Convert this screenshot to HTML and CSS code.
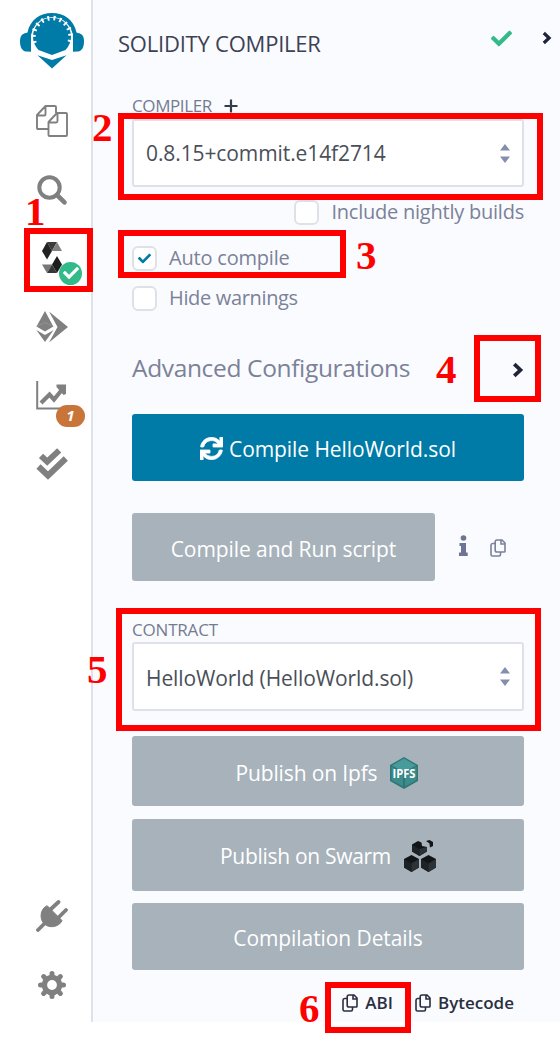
FILE: index.html
```html
<!DOCTYPE html>
<html lang="en">
<head>
<meta charset="utf-8">
<title>Solidity compiler</title>
<link rel="stylesheet" href="styles.css">
</head>
<body>
<svg class="defs" aria-hidden="true">
  <symbol id="copy" viewBox="0 0 16 18">
    <path d="M7 1h5l3 3v8.200q0 .8-.8.8H7q-1.800 0-1.800-1.800V2.800Q5.200 1 7 1zM11 1.200V5h3.800M4.700 4.500H2.600Q1 4.500 1 6.200V15.500q0 1.500 1.500 1.500H9q1.500 0 1.500-1.500V13.500" fill="none" stroke="currentColor" stroke-width="1.600"/>
  </symbol>
  <symbol id="chevron" viewBox="0 0 11 15">
    <path d="M2 2l5.800 5.500L2 13" fill="none" stroke="currentColor" stroke-width="3.500"/>
  </symbol>
  <symbol id="check" viewBox="0 0 512 512">
    <path fill="currentColor" d="M173.898 439.404l-166.400-166.400c-9.997-9.997-9.997-26.206 0-36.204l36.203-36.204c9.997-9.998 26.207-9.998 36.204 0L192 312.690 432.095 72.596c9.997-9.997 26.207-9.997 36.204 0l36.203 36.204c9.997 9.997 9.997 26.206 0 36.204l-294.400 294.401c-9.998 9.997-26.207 9.997-36.204-.001z"/>
  </symbol>
  <symbol id="sort" viewBox="0 0 10 19">
    <path fill="#868ead" d="M0 6.500L5 0l5 6.500zM0 12.500h10L5 19z"/>
  </symbol>
</svg>
<div class="app">
  <nav class="rail">
    <div class="logo">
      <svg width="64" height="56" viewBox="0 0 64 56" fill="#007aa6">
        <path d="M7.500 19.500C10 7 20 0 32 0s22 7 24.500 19.500l1.500.5c4 .8 6 3 6 8.500s-2 9.500-6 10l-5 .2V27C53 14 43 5.500 32 5.500S11 14 11 27v11.700l-5-.2c-4-.5-6-4.500-6-10s2-7.700 6-8.500z"/>
        <path d="M11 25a21 21 0 0 1 42 0v13.500L32 46 11 38.500z" fill="#fff"/>
        <path d="M18.500 37a19 19 0 1 1 27 0L32 42z"/>
        <path d="M15.300 31.800a18.600 18.600 0 1 1 33.400 0" fill="none" stroke="#fff" stroke-width="4.600" stroke-dasharray="2 4.170" stroke-dashoffset="-2"/>
        <path d="M13.500 40.500l2-2.500L32 44.500 48.500 38l2 2.500L32 49z" fill="#fff"/>
        <path d="M17.500 42.300L32 47l14.500-4.700L32 55.500z"/>
      </svg>
    </div>
    <div class="tool">
      <svg width="32" height="32" viewBox="0 0 32 32" fill="none" stroke="#808080" stroke-width="1.900" stroke-linejoin="round">
        <path d="M12.500 24H2q-1 0-1-1V10l8.500-9H19q1 0 1 1v6M1.500 10.500h7q1 0 1-1V1.500M12.500 30V17L21 8h9q1 0 1 1v21q0 1-1 1H13.500q-1 0-1-1zM13 17.500h7q1.500 0 1.500-1.500V8.500"/>
      </svg>
    </div>
    <div class="tool">
      <svg width="32" height="32" viewBox="0 0 32 32" fill="none" stroke="#808080">
        <circle cx="13.500" cy="13.500" r="10.200" stroke-width="4"/><path d="M21 21l7.500 7.300" stroke-width="4.600" stroke-linecap="round"/>
      </svg>
    </div>
    <div class="tool">
      <svg class="sol" width="20" height="32" viewBox="0 0 20 32">
        <path d="M5 0h10l-5 9z" fill="#3b3b3b"/><path d="M15 0l5 9H10z" fill="#818181"/><path d="M5 0l5 9-5 8.500L0 9z" fill="#222"/>
        <path d="M15 14l5 8.500-5 8.500-5-8.500z" fill="#1d1d1d"/><path d="M0 22.500h10L5 31z" fill="#777"/><path d="M10 22.500L15 31H5z" fill="#373737"/>
      </svg>
      <span class="ok"><svg width="16" height="16"><use href="#check"/></svg></span>
    </div>
    <div class="tool">
      <svg width="32" height="32" viewBox="0 0 32 32" fill="#808080">
        <path d="M9 0l8.300 15.500L9 20.500.500 15.500zM.300 19L9 24l8.600-5L9 31zM13 .500L32 16 13 31.500 21.500 16z"/>
        <path d="M.500 15.500L9 11.500l8.300 4" fill="none" stroke="#a0a0a0" stroke-width=".6"/>
      </svg>
    </div>
    <div class="tool">
      <svg width="32" height="30" viewBox="0 0 32 30" fill="none" stroke="#808080">
        <path d="M1.200 0v27.500H31" stroke-width="2"/><path d="M5 22l8.500-8.500 4.500 5L27 7.500" stroke-width="4.200"/><path d="M20.500 3.500H30V13l-2.500 1-7-8z" fill="#808080" stroke="none"/>
      </svg>
      <span class="count">1</span>
    </div>
    <div class="tool">
      <svg width="32" height="32" viewBox="0 0 32 32" fill="none" stroke="#808080" stroke-width="6">
        <path d="M2.500 18.500L12 27.500 29.800 10.500"/><path d="M5 7.800l6.200 5.900L23.200 2.300"/>
      </svg>
    </div>
    <div class="tool first-bottom">
      <svg width="32" height="32" viewBox="0 0 32 32" fill="#808080" stroke="#808080" stroke-linecap="round">
        <path d="M2 30l7-7M15 9l7.500-7M23 17l7-7" stroke-width="3.800"/><path d="M11.500 6L26 20.500l-1 2C19 29 10.500 27 7.500 23 3.500 18 4.500 10 9.500 6.500z" stroke-width="1"/>
      </svg>
    </div>
    <div class="tool">
      <svg width="28" height="28" viewBox="-14 -14 28 28" fill="none" stroke="#808080">
        <circle r="7.600" stroke-width="5.400"/>
        <path d="M0-10v-1.500M0 10v1.500M-10 0h-1.500M10 0h1.500M7 7l1.400 1.400M-7 7l-1.400 1.400M7-7l1.400-1.400M-7-7l-1.400-1.400" stroke-width="5" stroke-linecap="round"/>
      </svg>
    </div>
  </nav>
  <main class="panel">
    <header class="head">
      <h1 class="title">SOLIDITY COMPILER</h1>
      <svg class="green" width="21" height="21"><use href="#check"/></svg>
      <svg class="dark" width="10" height="14"><use href="#chevron"/></svg>
    </header>
    <div class="body">
      <div class="label"><span>COMPILER</span><svg width="14" height="14" viewBox="0 0 14 14"><path d="M7 .500v13M.500 7h13" stroke="#333d4c" stroke-width="2.200"/></svg></div>
      <div class="select"><span class="version">0.8.15+commit.e14f2714</span><svg width="10" height="19"><use href="#sort"/></svg></div>
      <div class="option nightly"><i class="box"></i><span>Include nightly builds</span></div>
      <div class="option auto"><i class="box"><svg width="13" height="13"><use href="#check"/></svg></i><span>Auto compile</span></div>
      <div class="option hide"><i class="box"></i><span>Hide warnings</span></div>
      <div class="advanced"><span>Advanced Configurations</span><svg width="12" height="16"><use href="#chevron"/></svg></div>
      <div class="button primary">
        <svg width="23" height="23" viewBox="0 0 512 512" fill="#fff" stroke="#fff" stroke-width="16"><path d="M440.650 12.570l4 82.770A247.160 247.160 0 0 0 255.830 8C134.730 8 33.910 94.920 12.290 209.820A12 12 0 0 0 24.090 224h49.050a12 12 0 0 0 11.670-9.260 175.910 175.910 0 0 1 317-56.940l-101.460-4.860a12 12 0 0 0-12.570 12v47.410a12 12 0 0 0 12 12H500a12 12 0 0 0 12-12V12a12 12 0 0 0-12-12h-47.370a12 12 0 0 0-11.980 12.570zM255.830 432a175.610 175.610 0 0 1-146-77.800l101.800 4.870a12 12 0 0 0 12.570-12v-47.400a12 12 0 0 0-12-12H12a12 12 0 0 0-12 12V500a12 12 0 0 0 12 12h47.350a12 12 0 0 0 12-12.600l-4.150-82.570A247.170 247.170 0 0 0 255.830 504c121.110 0 221.930-86.920 243.550-201.820a12 12 0 0 0-11.800-14.180h-49.050a12 12 0 0 0-11.670 9.260A175.860 175.860 0 0 1 255.830 432z"/></svg>
        <span>Compile HelloWorld.sol</span>
      </div>
      <div class="run-row">
        <div class="button run"><span>Compile and Run script</span></div>
        <svg class="info" width="9" height="21" viewBox="0 0 9 21" fill="#6c7593"><circle cx="4.500" cy="3" r="2.800"/><path d="M.500 8H7v9.500h1.700V21H0v-3.500h2V11H.500z"/></svg>
        <svg class="muted" width="16" height="18"><use href="#copy"/></svg>
      </div>
      <div class="label contract"><span>CONTRACT</span></div>
      <div class="select second"><span>HelloWorld (HelloWorld.sol)</span><svg width="10" height="19"><use href="#sort"/></svg></div>
      <div class="button ipfs"><span>Publish on Ipfs</span>
        <svg width="28" height="32" viewBox="0 0 28 32"><path d="M14 0l14 8v16l-14 8L0 24V8z" fill="#2f7777"/><path d="M14 1.500L26 8.500 14 15 2 8.500z" fill="#479b9b"/><path d="M1.500 9.500L13 16.500v13L1.500 23zM26.500 9.500L15 16.500v13l11.500-6.500z" fill="#3c8c8c"/><text class="cube-text" x="14" y="20.500" text-anchor="middle" textLength="23" lengthAdjust="spacingAndGlyphs">IPFS</text></svg>
      </div>
      <div class="button swarm"><span>Publish on Swarm</span>
        <svg width="32" height="32" viewBox="0 0 32 32"><path d="M7.500 15l7.500 4v8.500L7.500 32 0 27.500V19zM24.500 15l7.500 4v8.500L24.500 32 17 27.500V19zM14 1l3.500 1.500L18 6l5 1v4.500L15.500 16 8 11.500V4.500zM22 1l3.500-1L29 2v4l-3 1.500-.5-4z" fill="#111518"/><path d="M7.500 23.500L0 19v8.500L7.500 32zM24.500 23.500L17 19v8.500l7.500 4.500zM15.500 9L8 4.500v7l7.500 4.500z" fill="#1c2225"/><path d="M7.500 23.500L15 19v8.500L7.500 32zM24.500 23.500L32 19v8.500L24.500 32zM15.500 9L23 7v4.500L15.500 16z" fill="#2c3236"/></svg>
      </div>
      <div class="button details"><span>Compilation Details</span></div>
      <div class="links">
        <svg width="16" height="18"><use href="#copy"/></svg><span class="abi">ABI</span>
        <svg width="16" height="18"><use href="#copy"/></svg><span class="bytecode">Bytecode</span>
      </div>
    </div>
  </main>
</div>
<div class="mark m1"></div><b class="num n1">1</b>
<div class="mark m2"></div><b class="num n2">2</b>
<div class="mark m3"></div><b class="num n3">3</b>
<div class="mark m4"></div><b class="num n4">4</b>
<div class="mark m5"></div><b class="num n5">5</b>
<div class="mark m6"></div><b class="num n6">6</b>
</body>
</html>
```
FILE: styles.css
```css
* { box-sizing: border-box; }
body { margin: 0; background: #fff; font-family: "Open Sans", "Noto Sans", sans-serif; color: #4a4f59; }
svg { display: block; flex: none; }
span { white-space: nowrap; }
.defs { position: absolute; width: 0; height: 0; }
.app { display: flex; height: 1022px; }
.rail { width: 93px; border-right: 2px solid #dfe1ea; display: flex; flex-direction: column; padding-bottom: 2.5px; }
.logo { height: 86.6px; padding: 13px 0 0 20px; flex: none; }
.tool { position: relative; height: 68.7px; padding-left: 13px; display: flex; align-items: center; justify-content: center; flex: none; }
.first-bottom { margin-top: auto; }
.ok { position: absolute; left: 59px; top: 38px; width: 23px; height: 23px; border-radius: 50%; background: #32ba89; color: #fff; display: flex; align-items: center; justify-content: center; }
.count { position: absolute; left: 56px; top: 43.5px; width: 29px; height: 22px; border-radius: 11px; background: #c97539; color: #fff; font: italic bold 15px/21px "Open Sans", sans-serif; text-align: center; }
.panel { flex: 1; background: #fafbff; }
.head { height: 88px; padding: 0 8px 0 25px; display: flex; align-items: center; }
.title { margin: 0; padding-bottom: 2px; flex: 1; font-size: 22px; font-weight: 400; letter-spacing: -.22px; color: #3c4154; }
.green { color: #32ba89; margin: 0 30px 12px 0; }
.dark { color: #1f2438; margin-bottom: 13px; }
.body { padding: 0 36px 0 39px; }
.label { height: 31px; padding-top: 5px; display: flex; align-items: center; gap: 12px; font-size: 17px; letter-spacing: -.4px; color: #747b91; }
.label span { margin-top: -1px; }
.select { height: 68px; padding: 0 12px; border: 2px solid #dfe1ea; border-radius: 3px; background: #fff; display: flex; align-items: center; justify-content: space-between; font-size: 21px; letter-spacing: -.1px; }
.select.second { height: 69px; }
.second span { margin-top: 2px; }
.option { display: flex; align-items: center; gap: 12px; height: 41px; font-size: 20px; letter-spacing: -.2px; color: #7b8298; }
.option span { margin-top: -3px; }
.nightly { height: 51px; justify-content: flex-end; letter-spacing: -.23px; }
.nightly span { margin-top: -2px; }
.hide { height: 40px; letter-spacing: -.34px; }
.hide .box { margin-top: -1px; }
.box { width: 25px; height: 25px; border: 2px solid #dfe1e8; border-radius: 6px; background: #fff; display: flex; align-items: center; justify-content: center; color: #007aa6; }
.advanced { height: 95px; padding-top: 6px; display: flex; align-items: center; justify-content: space-between; font-size: 24.5px; letter-spacing: -.35px; color: #7b8298; }
.advanced span { margin-top: -4px; }
.advanced svg { color: #1f2438; }
.button { display: flex; align-items: center; justify-content: center; border-radius: 3px; background: #a7b2bb; color: #fff; font-size: 21px; letter-spacing: -.08px; }
.button span { margin-top: 2px; }
.primary { height: 67px; background: #007aa6; gap: 6px; }
.primary svg { margin-top: 2px; }
.run-row { display: flex; align-items: center; margin-top: 32px; height: 68px; }
.run { width: 303px; height: 68px; }
.run span { margin-top: 4px; }
.info { margin: 0 22px 3px 24px; }
.muted { color: #7b8298; margin-top: 2px; }
.contract { height: 61px; padding-top: 37px; letter-spacing: -.2px; }
.ipfs { height: 70px; margin-top: 25px; gap: 13px; padding-right: 2px; letter-spacing: -.14px; }
.ipfs svg { margin-top: 4px; }
.ipfs span { margin-top: 4px; }
.swarm { height: 72px; margin-top: 13px; gap: 13px; letter-spacing: -.3px; }
.swarm svg { margin-top: 2px; }
.swarm span { margin-top: 1px; }
.details { height: 67px; margin-top: 12px; }
.details span { margin-top: 3px; }
.cube-text { font: bold 12.5px "Open Sans", sans-serif; letter-spacing: 0; fill: #fff; }
.links { height: 52px; padding: 14px 10px 0 0; display: flex; align-items: center; justify-content: flex-end; font-size: 17px; font-weight: 600; color: #2a2f40; gap: 7px; }
.links span { margin-top: -1px; }
.abi { margin-right: 15px; }
.mark { position: absolute; border: 6px solid #f00; }
.num { position: absolute; font: bold 41px/41px "Liberation Serif", serif; color: #f00; }
.m1 { left: 24px; top: 228px; width: 69px; height: 64px; }
.m2 { left: 118px; top: 113px; width: 425px; height: 87px; }
.m3 { left: 118px; top: 230px; width: 228px; height: 48px; }
.m4 { left: 474px; top: 335px; width: 67px; height: 67px; }
.m5 { left: 116px; top: 608px; width: 425px; height: 123px; }
.m6 { left: 325px; top: 982px; width: 86px; height: 51px; }
.n1 { left: 25px; top: 191px; }
.n2 { left: 92px; top: 107px; }
.n3 { left: 356px; top: 235px; }
.n4 { left: 436px; top: 349px; }
.n5 { left: 87px; top: 649px; }
.n6 { left: 299px; top: 988px; }
```
